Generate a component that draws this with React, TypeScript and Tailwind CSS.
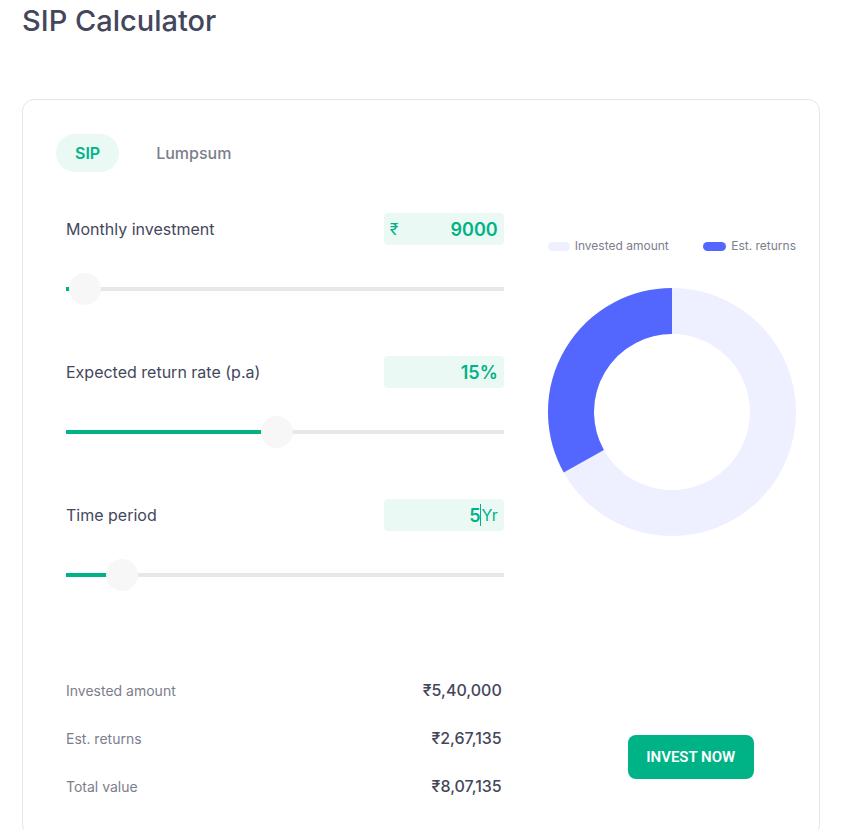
import React from "react";

const font = {fontFamily: "Inter, 'Noto Sans', sans-serif"};

type SliderRowProps = {
	label: string;
	thumb: number;
	children: React.ReactNode;
};

const SliderRow = ({label, thumb, children}: SliderRowProps) => (
	<div className="flex flex-col">
		<div className="flex h-8 items-center justify-between">
			<span className="text-[16px] text-[#44475b]">{label}</span>
			<div className="flex h-8 w-[120px] items-center rounded bg-[#ebf9f5] px-[6px] text-[#00b386]">
				{children}
			</div>
		</div>
		<div className="relative mt-[28px] flex h-8 items-center">
			<div className="h-1 w-full bg-[#e7e7e9]"/>
			<div className="absolute left-0 top-[14px] h-1 bg-[#00b386]" style={{width: thumb + 1}}/>
			<div className="absolute top-0 h-8 w-8 rounded-full bg-[#f7f7f7]" style={{left: thumb}}/>
		</div>
	</div>
);

const Donut = () => {
	const cx = 124;
	const cy = 124;
	const r = 101;
	const share = 267135 / 807135;
	const angle = share * 2 * Math.PI;
	const endX = cx - r * Math.sin(angle);
	const endY = cy - r * Math.cos(angle);
	return (
		<svg width="248" height="248" viewBox="0 0 248 248">
			<circle cx={cx} cy={cy} r={r} fill="none" stroke="#eef0ff" strokeWidth="46"/>
			<path
				d={`M ${cx} ${cy - r} A ${r} ${r} 0 0 0 ${endX} ${endY}`}
				fill="none"
				stroke="#5367ff"
				strokeWidth="46"
			/>
		</svg>
	);
};

const SummaryRow = ({label, value}: { label: string; value: string }) => (
	<div className="flex h-5 items-center justify-between">
		<span className="text-[14px] text-[#7c7e8c]">{label}</span>
		<span className="text-[16px] font-medium text-[#44475b]">{value}</span>
	</div>
);

export default function App() {
	return (
		<div className="min-h-[830px] bg-white px-[22px] pt-[3px]" style={font}>
			<h1 className="text-[29px] font-medium leading-[36px] text-[#44475b]">SIP Calculator</h1>

			<div className="mt-[60px] w-[798px] rounded-xl border border-[#e6e6e6] pb-10 pl-[33px] pr-[23px] pt-[34px]">
				<div className="flex items-center gap-[37px]">
					<button className="h-[38px] rounded-full bg-[#ebf9f5] px-[19px] text-[16px] font-semibold text-[#00b386]">
						SIP
					</button>
					<button className="text-[16px] font-medium text-[#7c7e8c]">Lumpsum</button>
				</div>

				<div className="mt-[41px] flex pl-[10px]">
					<div className="flex w-[439px] flex-col">
						<div className="flex flex-col gap-[51px]">
							<SliderRow label="Monthly investment" thumb={3}>
								<span className="text-[16px]">₹</span>
								<span className="ml-auto text-[18px] font-semibold">9000</span>
							</SliderRow>
							<SliderRow label="Expected return rate (p.a)" thumb={195}>
								<span className="ml-auto text-[18px] font-semibold">15%</span>
							</SliderRow>
							<SliderRow label="Time period" thumb={40}>
								<span className="ml-auto text-[18px] font-semibold">5</span>
								<span className="h-[22px] w-px bg-[#00b386]"/>
								<span className="text-[16px]">Yr</span>
							</SliderRow>
						</div>

						<div className="mt-[89px] flex flex-col gap-[28px] pr-[2px]">
							<SummaryRow label="Invested amount" value="₹5,40,000"/>
							<SummaryRow label="Est. returns" value="₹2,67,135"/>
							<SummaryRow label="Total value" value="₹8,07,135"/>
						</div>
					</div>

					<div className="ml-[44px] flex w-[249px] flex-col">
						<div className="mt-[24px] flex w-full items-center justify-between text-[12px] text-[#7c7e8c]">
							<span className="flex items-center gap-[5px]">
								<span className="h-[9px] w-[22px] rounded-full bg-[#eef0ff]"/>
								Invested amount
							</span>
							<span className="flex items-center gap-[5px]">
								<span className="h-[9px] w-[23px] rounded-full bg-[#5367ff]"/>
								Est. returns
							</span>
						</div>
						<div className="mt-[33px]">
							<Donut/>
						</div>
						<button
							className="ml-[80px] mt-[199px] h-[44px] w-[126px] rounded-lg bg-[#00b386] text-[15px] font-semibold text-white"
							style={{fontFamily: "Roboto, sans-serif"}}
						>
							INVEST NOW
						</button>
					</div>
				</div>
			</div>
		</div>
	);
}
